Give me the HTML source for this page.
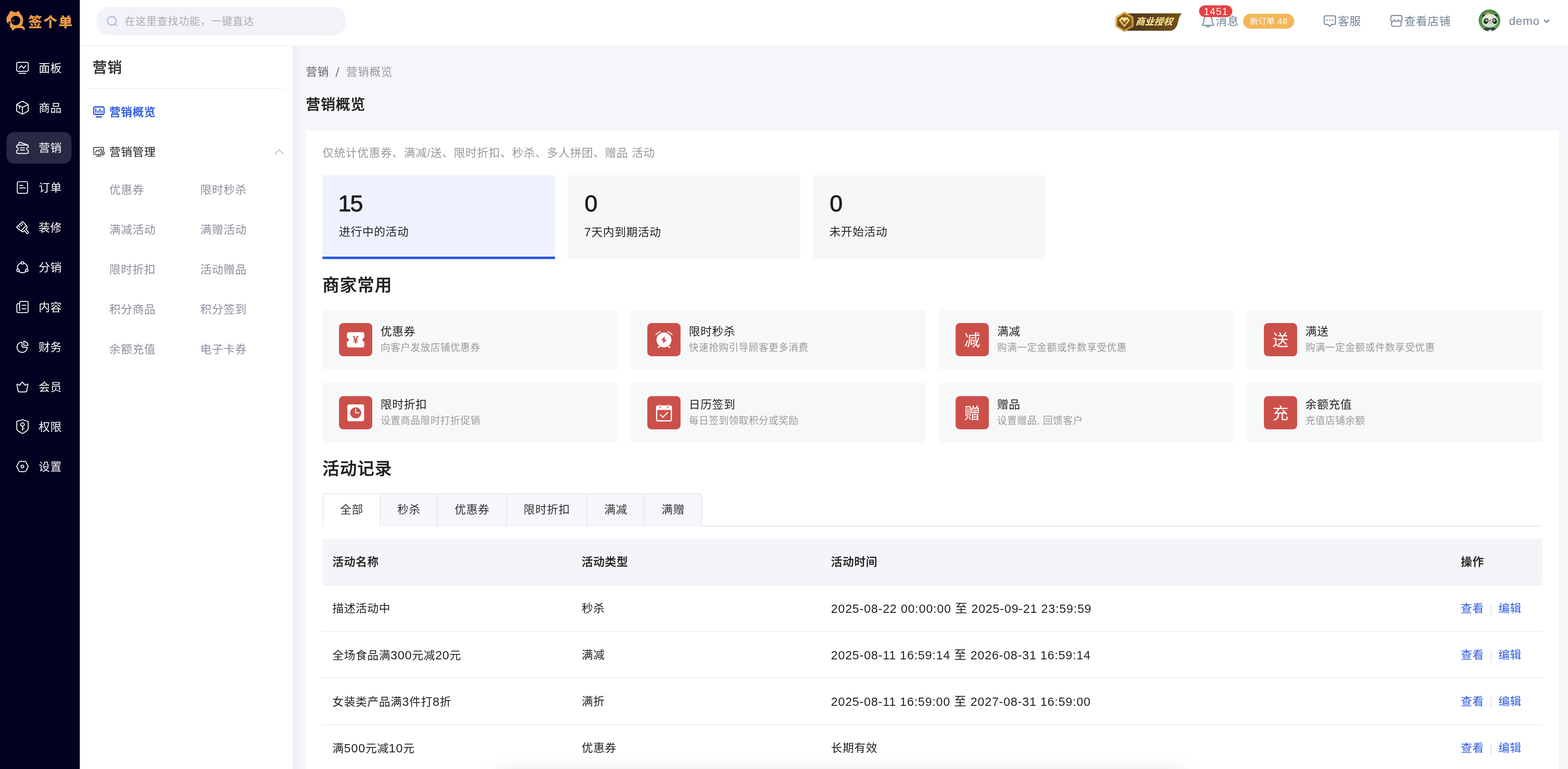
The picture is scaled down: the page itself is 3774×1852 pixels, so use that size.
<!DOCTYPE html>
<html lang="zh-CN">
<head>
<meta charset="utf-8">
<title>营销概览</title>
<style>
*{box-sizing:border-box;margin:0;padding:0}
html,body{width:3774px;height:1852px;overflow:hidden;background:#f5f6fa}
body{font-family:"Liberation Sans","Noto Sans CJK SC",sans-serif;font-size:27.2px;letter-spacing:.8px;color:#303133;-webkit-font-smoothing:antialiased}
#app{will-change:transform;position:relative;width:3774px;height:1852px;overflow:hidden;background:#f5f6fa}
.abs{position:absolute}
svg{display:block;overflow:visible}
/* ---------- left nav ---------- */
#nav{position:absolute;left:0;top:0;width:192px;height:1852px;background:#020121}
.ni{position:absolute;left:16px;width:156px;height:76px;border-radius:18px;color:#fff}
.ni.on{background:#2a2945}
.ni svg{position:absolute;left:14px;top:13px;width:50px;height:50px;fill:none;stroke:#fff;stroke-width:2.2;stroke-linecap:round;stroke-linejoin:round}
.ni span{position:absolute;left:77px;top:1px;line-height:76px;font-size:27.2px;letter-spacing:.8px;white-space:nowrap}
/* ---------- header ---------- */
#hd{position:absolute;left:192px;top:0;width:3582px;height:112px;background:#fff;border-bottom:2px solid #f0f1f5}
#search{position:absolute;left:40px;top:17px;width:600px;height:68px;border-radius:30px;background:#f2f3f8}
#search span{position:absolute;left:68px;top:0;line-height:68px;font-size:25.2px;letter-spacing:.8px;color:#a9abb2;white-space:nowrap}
.ht{position:absolute;top:1px;line-height:102px;font-size:27.2px;letter-spacing:.8px;color:#748698;white-space:nowrap}
/* ---------- sub menu ---------- */
#sub{position:absolute;left:192px;top:112px;width:512px;height:1740px;background:#fff}
#sub .tt{position:absolute;left:30.5px;top:15px;-webkit-text-stroke:.4px #333;line-height:72px;font-size:34.9px;letter-spacing:1.1px;font-weight:500;color:#333}
#sub .ln{position:absolute;left:20px;top:100px;width:472px;height:2px;background:#eff0f5}
#sub .m1{position:absolute;left:71px;line-height:60px;font-size:27.2px;letter-spacing:.8px;white-space:nowrap}
#sub .s{position:absolute;line-height:60px;font-size:27.2px;letter-spacing:.8px;color:#8d8f9c;white-space:nowrap}
/* ---------- main ---------- */
#main{position:absolute;left:704px;top:112px;width:3070px;height:1740px}#main:before{content:"";position:absolute;left:0;top:0;width:28px;height:100%;background:linear-gradient(90deg,rgba(30,40,90,.022),rgba(30,40,90,0))}
#bc{position:absolute;left:32px;top:37px;line-height:50px;font-size:27.2px;letter-spacing:.8px;color:#999;white-space:nowrap}
#bc b{font-weight:400;color:#666}#bc i{font-style:normal;display:inline;line-height:0;padding:0 15.8px;font-size:34px;letter-spacing:0;color:#888;position:relative;left:-.5px;top:3px}
#pt{position:absolute;left:32px;top:109.6px;line-height:60px;font-size:34.9px;letter-spacing:1.1px;font-weight:500;-webkit-text-stroke:.5px #1f1f1f;color:#1f1f1f;white-space:nowrap}
#panel{position:absolute;left:32px;top:202px;width:3016px;height:1600px;background:#fff}
#tip{position:absolute;left:40px;top:30px;line-height:50px;font-size:27.2px;letter-spacing:.8px;color:#999;white-space:nowrap}
.st{position:absolute;top:108px;width:560px;height:202px;background:#f7f7f7}
.st.on{background:#eef1fe;border-bottom:6px solid #2f5be0}
.st .n{position:absolute;left:38px;top:32px;line-height:72px;font-size:56px;font-weight:400;letter-spacing:-2.500px;-webkit-text-stroke:1.1px #1f1f1f;color:#1f1f1f}
.st .l{position:absolute;left:40px;top:112px;line-height:50px;font-size:27.2px;letter-spacing:.8px;color:#262626;white-space:nowrap}
.h2{position:absolute;left:40px;line-height:60px;font-size:40.7px;letter-spacing:1.3px;font-weight:500;-webkit-text-stroke:.6px #1f1f1f;color:#1f1f1f;white-space:nowrap}
.qc{position:absolute;width:710px;height:144px;background:#f7f8fa;border-radius:4px}
.qc .ic{position:absolute;left:40px;top:32px;width:80px;height:80px;border-radius:10px;background:#cc504a;color:#fff;font-size:38.500px;letter-spacing:0;line-height:83px;text-align:center}
.qc .ic svg{position:absolute;left:0;top:0;width:80px;height:80px}
.qc .t{position:absolute;left:140px;top:29px;line-height:48px;font-size:27.2px;letter-spacing:.8px;color:#222;white-space:nowrap}
.qc .d{position:absolute;left:140px;top:71px;line-height:40px;font-size:23.3px;letter-spacing:.7px;color:#999;white-space:nowrap}
#tabs{position:absolute;left:40px;top:874px;width:2936px;height:80px;border-bottom:2px solid #e4e7ed}
#tabs .tb{position:absolute;left:0;top:0;height:80px;display:flex;border:2px solid #e4e7ed;border-bottom:none;border-radius:8px 8px 0 0;background:#f5f7fa;overflow:hidden}
#tabs .tb div{height:78px;line-height:76px;padding:0 39.6px 0 40.4px;font-size:27.2px;letter-spacing:.8px;color:#303133;border-left:2px solid #e4e7ed;white-space:nowrap}
#tabs .tb div:first-child{border-left:none;background:#fff;height:80px}
#tbl{position:absolute;left:40px;top:984px;width:2936px}
.tr{position:relative;height:112px;border-bottom:2px solid #ebeef5}
.tr.th{background:#f4f5f9;font-weight:500;-webkit-text-stroke:.35px #1f1f1f}.tr.th div{top:1px;color:#1f1f1f}
.tr div{position:absolute;top:1px;color:#222;line-height:110px;font-size:27.2px;letter-spacing:.8px;white-space:nowrap}
.c1{left:24px}.c2{left:624px}.c3{left:1224px}.c4{left:2740px}
.c4 a{color:#2f5ce0;text-decoration:none}
.c4 i{display:inline-block;width:2px;height:28px;background:#dfe1e8;margin:0 16.4px 0 16px;vertical-align:-8px;letter-spacing:0}
.L{font-size:29px;letter-spacing:1.1px}
@media (max-width:2400px){html,body{width:1887px;height:926px}#app{zoom:.5}}
</style>
</head>
<body>
<div id="app">
<div id="nav">
<svg class="abs" style="left:0;top:10px;width:192px;height:80px" viewBox="0 0 192 80"><path fill="#ec9b45" fill-rule="evenodd" d="M28.300 15.800c2.500 2.500 5 3.600 8.200 3.700 3.200-.1 5.700-1.200 8.200-3.700 1.500 2.300 2.500 4.500 3.700 6.600 2 2.700 4 5 5.300 7.400 1.500 3 2 6 2 9s-.5 6.200-1.300 8.900c-.7 1.800-1.700 3.200-3 4.500 1.800.2 3.300.7 4.500 1.500 1.700 1 3 2.400 3.400 3.700.5 1.400.6 2.700.3 3.300-.4 1-1.200 1.800-2.200 2.300-.5-1.200-1.100-2.200-1.900-3-1-1-2.400-1.600-4.100-1.900-2-.4-4.300-.6-6.700-.7-2.700 0-5.200.4-7.400 1.100-1 .3-1.900.7-2.600 1.100-.1 1-.6 1.800-1.200 2.600-.9.400-2.300.6-3.700.6-1.200-.5-1.900-1.200-1.900-2.100.1-.7.700-1.300 1.500-1.800-1.500-.8-2.900-1.800-4.100-3-1.500-1.500-1.800-2.500-1.400-3 .5-.5.600-1 .3-1.900l-1-2.600c-1.700-.6-3.500-1.500-4.800-2.700-1.800-1.800-2.700-4-2.900-7.100-.2-2.700.1-4.900 1-7.300 1-2.500 2.600-4.600 4.200-6.900 1.300-2 2.500-4.500 3.600-6.600zM37.600 28.300a11.200 11.200 0 1 0 0 22.400 11.200 11.200 0 0 0 0-22.400z"/><rect x="29.100" y="38.600" width="5.600" height="2" rx=".6" fill="#ec9b45"/><circle cx="22.600" cy="44.600" r="2.600" fill="#020121"/><path d="M21 46l4 5.500-2.500-.8z" fill="#020121"/></svg><div class="abs" style="left:68px;top:31px;line-height:46px;font-size:33.500px;font-weight:900;letter-spacing:3px;color:#ec9b45;white-space:nowrap">签个单</div>
<div class="ni" style="top:126px"><svg viewBox="0 0 50 50" style="top:14px"><rect x="10.2" y="10.1" width="27.8" height="21.7" rx="3.4"/><path d="M15.8 23.9l5.600-5.900 5.100 6.200 5.700-5.900M15.800 36.600h16.500"/></svg><span>面板</span></div>
<div class="ni" style="top:222px"><svg viewBox="0 0 50 50" style="top:13px"><path d="M22.900 9.500a2.600 2.600 0 0 1 2.300 0l11.400 6.100a2.600 2.600 0 0 1 1.400 2.300v13.100a2.600 2.600 0 0 1-1.400 2.300l-11.400 6.100a2.600 2.600 0 0 1-2.300 0l-11.400-6.100a2.600 2.600 0 0 1-1.400-2.300V17.900a2.600 2.600 0 0 1 1.400-2.300z"/><path d="M10.700 17.200l13.350 6.300 13.350-6.300M24.050 23.500v16M16.700 20.400v6"/></svg><span>商品</span></div>
<div class="ni on" style="top:318px"><svg viewBox="0 0 50 50" style="top:13px"><path d="M13.200 18.400h21.800a3 3 0 0 1 3 3v2.600a3.700 3.700 0 0 0 0 7.400v4.200a3 3 0 0 1-3 3H13.200a3 3 0 0 1-3-3v-4.200a3.700 3.700 0 0 0 0-7.400v-2.600a3 3 0 0 1 3-3z"/><path d="M14 18.200l1.400-4.600a2.600 2.600 0 0 1 3.300-1.700l17.800 6.200M19.200 25h9.700M19.200 30.300h9.700"/></svg><span>营销</span></div>
<div class="ni" style="top:414px"><svg viewBox="0 0 50 50" style="top:13px"><rect x="11.600" y="10.500" width="24.800" height="28.100" rx="3.200"/><path d="M17.200 19.600h7.800M17.200 25.600h13.900"/></svg><span>订单</span></div>
<div class="ni" style="top:510px"><svg viewBox="0 0 50 50" style="top:13px"><path d="M23.300 11.200a1.600 1.600 0 0 1 2.300.1l9.400 11.300a2.400 2.400 0 0 1-.1 3.200l-3 3 5.600 6.100a2.500 2.500 0 0 1-3.600 3.500l-5.200-6.400-2.400 2.400a2.600 2.600 0 0 1-3.400.2L10.900 25.500a1.600 1.600 0 0 1-.1-2.400z"/><path d="M31.900 21.300L21.800 32M15.600 22.300l1.900 2M19.500 18.700l1.900 2.100M23 15.400l1.500 2.300"/></svg><span>装修</span></div>
<div class="ni" style="top:606px"><svg viewBox="0 0 50 50" style="top:13px"><circle cx="23.900" cy="25.900" r="12"/><circle cx="23.850" cy="14.050" r="3.100" fill="#020121"/><circle cx="13.450" cy="32.050" r="3.100" fill="#020121"/><circle cx="34.400" cy="32.050" r="3.100" fill="#020121"/></svg><span>分销</span></div>
<div class="ni" style="top:702px"><svg viewBox="0 0 50 50" style="top:13px"><path d="M17.200 16.400h-3.500a3.200 3.200 0 0 0-3.200 3.200v15.200a3.200 3.200 0 0 0 3.200 3.200h20.700a3.200 3.200 0 0 0 3.200-3.200V14.100a3.200 3.200 0 0 0-3.200-3.200H20.400a3.200 3.200 0 0 0-3.200 3.200v18.700M22.900 20h9.300M22.900 28.900h9.300"/></svg><span>内容</span></div>
<div class="ni" style="top:798px"><svg viewBox="0 0 50 50" style="top:13px"><path d="M23 13A12.300 12.300 0 1 0 35.600 25.300H26a3 3 0 0 1-3-3z"/><path d="M27.300 10.900a10.100 10.100 0 0 1 9.900 10.100h-9.900z"/></svg><span>财务</span></div>
<div class="ni" style="top:894px"><svg viewBox="0 0 50 50" style="top:13px"><path d="M10.700 19.200a1 1 0 0 1 1.400-1l4.300 2.300a1.200 1.200 0 0 0 1.500-.3l5.100-6.400a1.200 1.200 0 0 1 1.900 0l5.100 6.400a1.200 1.200 0 0 0 1.500.3l4.300-2.300a1 1 0 0 1 1.400 1l-2.800 15a3.200 3.200 0 0 1-3.100 2.600H16.600a3.200 3.200 0 0 1-3.100-2.600z"/></svg><span>会员</span></div>
<div class="ni" style="top:990px"><svg viewBox="0 0 50 50" style="top:13px"><path d="M23.300 8a2.400 2.400 0 0 1 1.500 0l12.100 3.800a1.300 1.300 0 0 1 .9 1.200v15.500c0 3-1.500 5.300-4.300 7L25 40.600a1.800 1.800 0 0 1-1.900 0L14.600 35.500c-2.800-1.700-4.300-4-4.300-7V13a1.300 1.300 0 0 1 .9-1.200z"/><circle cx="24.200" cy="19.400" r="4.200"/><path d="M24.200 23.600v10M24.200 28.500h3.900"/></svg><span>权限</span></div>
<div class="ni" style="top:1086px"><svg viewBox="0 0 50 50" style="top:13px"><path d="M18.600 12.100h10.900a3.200 3.200 0 0 1 2.800 1.600l5 9a3.200 3.200 0 0 1 0 3.200l-5 9.300a3.200 3.200 0 0 1-2.800 1.600H18.600a3.200 3.200 0 0 1-2.800-1.600l-5-9.300a3.200 3.200 0 0 1 0-3.200l5-9a3.200 3.200 0 0 1 2.800-1.600z"/><circle cx="23.900" cy="24.400" r="3.400"/></svg><span>设置</span></div>
</div>
<div id="hd">
<div id="search"><svg class="abs" style="left:26px;top:22px;width:26px;height:26px" viewBox="0 0 26 26" fill="none" stroke="#8b9fd2" stroke-width="1.700"><circle cx="11.200" cy="11.200" r="10.400"/><path d="M18.500 18.500l4.300 4.500" stroke-linecap="round"/></svg><span>在这里查找功能，一键直达</span></div>
<svg class="abs" style="left:2478px;top:15px;width:190px;height:75px" viewBox="0 0 190 75"><defs><linearGradient id="bg1" x1="0" y1="0" x2="1" y2="0"><stop offset="0" stop-color="#4a3522"/><stop offset=".6" stop-color="#63451a"/><stop offset="1" stop-color="#755218"/></linearGradient><linearGradient id="bg2" x1="0" y1="0" x2="1" y2="1"><stop offset="0" stop-color="#f1d57c"/><stop offset=".5" stop-color="#d2a443"/><stop offset="1" stop-color="#b98b30"/></linearGradient><linearGradient id="bg3" x1="0" y1="0" x2="0" y2="1"><stop offset="0" stop-color="#93641f"/><stop offset="1" stop-color="#6a4514"/></linearGradient><linearGradient id="bg4" x1="0" y1="0" x2="0" y2="1"><stop offset="0" stop-color="#f8e59c"/><stop offset="1" stop-color="#d4ae55"/></linearGradient></defs><path fill="url(#bg1)" d="M40 17.200h134.500c-4.500 5-7 10.500-8.500 18-1.500 8-3.500 14.500-9 19.500-3.500 3-7.500 4.300-11.500 4.300H40z"/><path fill="url(#bg2)" d="M36.100 12.200l22.200 13.200V49L36.100 61.700 14.400 49V25.400z"/><path fill="url(#bg3)" d="M36.100 17.600l17.600 10.400v18.400L36.100 56.400 18.900 46.400V28z"/><path fill="url(#bg4)" d="M29.100 27h14.400l5.900 7L36.100 51 22.900 34z"/><path fill="#7a5218" d="M27 33h4.800l4.400 6.100 4.400-6.100h4.800l-9.200 12z"/></svg><div class="abs" style="left:2541px;top:33px;line-height:40px;font-size:22.500px;font-weight:900;font-style:italic;letter-spacing:0;color:#f3d98c;white-space:nowrap;transform:skewX(-4deg);text-shadow:0 1px 1px rgba(60,35,5,.5)">商业授权</div><svg class="abs" style="left:2688px;top:26px;width:60px;height:50px" viewBox="0 0 60 50" fill="none" stroke="#748698" stroke-width="2.300" stroke-linecap="round" stroke-linejoin="round"><path d="M17.400 22.400a10.100 10.100 0 0 1 20.200 0v3.600c0 1.800.5 3 1.500 4.300l1.700 2.300a1.500 1.500 0 0 1-1.200 2.400H15.400a1.500 1.500 0 0 1-1.200-2.400l1.700-2.300c1-1.300 1.500-2.500 1.500-4.300z"/><path d="M22.800 35.400a4.900 4.900 0 0 0 9.400 0"/></svg><svg class="abs" style="left:2983px;top:26px;width:60px;height:50px" viewBox="0 0 60 50" fill="none" stroke="#748698" stroke-width="2.400" stroke-linejoin="round"><path d="M15 12.100h21.300a2.700 2.700 0 0 1 2.700 2.700v15.300a2.700 2.700 0 0 1-2.700 2.700h-6.200l-4.400 4.800-4.300-4.800H15a2.700 2.700 0 0 1-2.700-2.700V14.800a2.700 2.700 0 0 1 2.700-2.700z"/><g fill="#748698" stroke="none"><circle cx="18.900" cy="22.500" r="1.800"/><circle cx="26" cy="22.500" r="1.800"/><circle cx="33" cy="22.500" r="1.800"/></g></svg><svg class="abs" style="left:3143px;top:26px;width:60px;height:50px" viewBox="0 0 60 50" fill="none" stroke="#748698" stroke-width="2.400" stroke-linecap="round" stroke-linejoin="round"><path d="M16.300 11.300h19.300a3.400 3.400 0 0 1 3.400 3.200l.8 6.300a4.600 4.600 0 0 1-9.200.3 4.600 4.600 0 0 1-9.200 0 4.600 4.600 0 0 1-9.200-.3l.8-6.300a3.400 3.400 0 0 1 3.300-3.200z"/><path d="M14.500 25v8.900a3.500 3.500 0 0 0 3.500 3.500h15.700a3.500 3.500 0 0 0 3.500-3.500V25"/></svg>
<div class="ht" style="left:2734px">消息</div>
<div class="abs" id="rb" style="left:2694px;top:13px;width:80px;height:28px;border-radius:14px;background:#e84141;color:#fff;font-size:23.5px;line-height:31px;text-align:center;letter-spacing:1.6px;padding-left:1.6px">1451</div>
<div class="abs" id="ob" style="left:2800px;top:33px;width:123px;height:36px;border-radius:18px;background:#f3b75a;color:#fff;font-size:19.5px;letter-spacing:.6px;line-height:36px;text-align:center;white-space:nowrap;padding-left:1px">新订单 <span style="font-size:20.5px;letter-spacing:1px">48</span></div>
<div class="ht" style="left:3028px">客服</div>
<div class="ht" style="left:3188px">查看店铺</div>
<svg class="abs" style="left:3358px;top:14px;width:70px;height:70px" viewBox="0 0 70 70"><defs><clipPath id="avc"><circle cx="35" cy="35" r="26.200"/></clipPath><linearGradient id="avg" x1="0" y1="0" x2="0" y2="1"><stop offset="0" stop-color="#4c8748"/><stop offset="1" stop-color="#659c50"/></linearGradient><radialGradient id="avh" cx=".45" cy=".3" r=".8"><stop offset="0" stop-color="#e6f4e4"/><stop offset="1" stop-color="#b9d9bb"/></radialGradient></defs><circle cx="35" cy="35" r="26.200" fill="url(#avg)"/><g clip-path="url(#avc)"><path d="M20 62c1-7 5-11 10-11h11c6 0 10 4 11 11z" fill="#3c4640"/><ellipse cx="36.500" cy="60.500" rx="4" ry="3" fill="#cfe6cf"/><circle cx="21.300" cy="24.200" r="3.300" fill="#1d241f"/><circle cx="50.500" cy="23.900" r="3.400" fill="#1d241f"/><ellipse cx="36" cy="36" rx="19.100" ry="16.600" fill="url(#avh)"/><ellipse cx="26.900" cy="36.700" rx="5.700" ry="7" transform="rotate(25 26.900 36.700)" fill="#1f2521"/><ellipse cx="47.100" cy="36.700" rx="5.700" ry="7" transform="rotate(-25 47.100 36.700)" fill="#1f2521"/><circle cx="28.200" cy="35.500" r="3" fill="#fff"/><circle cx="45.700" cy="35.500" r="3" fill="#fff"/><circle cx="28.800" cy="35.500" r="1.500" fill="#222"/><circle cx="45.100" cy="35.500" r="1.500" fill="#222"/><circle cx="36.300" cy="35.400" r="2.100" fill="#d8563c"/><path d="M36.300 37.600v3.400M34.300 42.100c1.500.3 3.700-.2 5.500-1.400" stroke="#7a5a4a" stroke-width=".7" fill="none" stroke-linecap="round"/><path d="M30.700 14.700l9.200 4.400-16.100 3.600z" fill="#dca34c"/></g></svg>
<div class="ht" style="left:3440px;color:#748698;font-size:28px;letter-spacing:1px;top:0">demo</div>
<svg class="abs" style="left:3523px;top:46px;width:15px;height:10px" viewBox="0 0 15 10" fill="none" stroke="#6f8098" stroke-width="2.8" stroke-linecap="round" stroke-linejoin="round"><path d="M2 2.200l5.500 5.500 5.500-5.500"/></svg>
</div>
<div id="sub">
<div class="tt">营销</div>
<div class="ln"></div>
<svg class="abs" style="left:22px;top:133px;width:50px;height:50px" viewBox="0 0 50 50" fill="none" stroke="#2650e0" stroke-width="2.800" stroke-linecap="round" stroke-linejoin="round"><rect x="11.500" y="12.500" width="24.900" height="18" rx="3"/><path d="M16.600 17.400v8.700M21.600 22.400v3.700M26.600 17.400v8.700M31.500 22.400v3.700M18 36.500h12.700"/></svg>
<div class="m1" style="top:129px;color:#2f5be0;font-weight:500;-webkit-text-stroke:.4px #2f5be0">营销概览</div>
<svg class="abs" style="left:22px;top:229px;width:50px;height:50px" viewBox="0 0 50 50" fill="none" stroke="#2b2b2b" stroke-width="1.850" stroke-linecap="round" stroke-linejoin="round"><path d="M35.300 21.400v-5a2.600 2.600 0 0 0-2.600-2.600H14.100a2.600 2.600 0 0 0-2.600 2.600v11.800a2.600 2.600 0 0 0 2.600 2.600h13M23.300 30.800v4.200M17.600 35.100h11.700M15.500 26.400l3.900-5.800 5.100 2.900 4-6.100 2.900 4"/><path d="M32.04 23.39Q32.75 22.30 33.46 23.39Q34.17 24.48 35.44 24.21Q36.71 23.94 36.44 25.21Q36.17 26.48 37.26 27.19Q38.35 27.90 37.26 28.61Q36.17 29.32 36.44 30.59Q36.71 31.86 35.44 31.59Q34.17 31.32 33.46 32.41Q32.75 33.50 32.04 32.41Q31.33 31.32 30.06 31.59Q28.79 31.86 29.06 30.59Q29.33 29.32 28.24 28.61Q27.15 27.90 28.24 27.19Q29.33 26.48 29.06 25.21Q28.79 23.94 30.06 24.21Q31.33 24.48 32.04 23.39z" stroke-width="1.500"/><circle cx="32.750" cy="27.900" r="1.500" stroke-width="1.400"/></svg>
<div class="m1" style="top:225px;color:#222">营销管理</div>
<svg class="abs" style="left:469px;top:248px;width:22px;height:12px" viewBox="0 0 22 12" fill="none" stroke="#b4b7c3" stroke-width="1.8" stroke-linecap="round" stroke-linejoin="round"><path d="M1 11L11 1l10 10"/></svg>
<div class="s" style="left:71px;top:316px">优惠券</div><div class="s" style="left:290px;top:316px">限时秒杀</div>
<div class="s" style="left:71px;top:412px">满减活动</div><div class="s" style="left:290px;top:412px">满赠活动</div>
<div class="s" style="left:71px;top:508px">限时折扣</div><div class="s" style="left:290px;top:508px">活动赠品</div>
<div class="s" style="left:71px;top:604px">积分商品</div><div class="s" style="left:290px;top:604px">积分签到</div>
<div class="s" style="left:71px;top:700px">余额充值</div><div class="s" style="left:290px;top:700px">电子卡券</div>
</div>
<div id="main">
<div id="bc"><b>营销</b><i>/</i>营销概览</div>
<div id="pt">营销概览</div>
<div id="panel">
<div id="tip">仅统计优惠券、满减/送、限时折扣、秒杀、多人拼团、赠品 活动</div>
<div class="st on" style="left:40px"><div class="n">15</div><div class="l">进行中的活动</div></div>
<div class="st" style="left:630px"><div class="n" style="left:41px">0</div><div class="l"><span class="L">7</span>天内到期活动</div></div>
<div class="st" style="left:1220px"><div class="n" style="left:41px">0</div><div class="l">未开始活动</div></div>
<div class="h2" style="top:343px">商家常用</div>
<div class="qc" style="left:40px;top:432px"><div class="ic"><svg viewBox="0 0 80 80"><path fill="#fff" d="M23.700 22h32.500a4.700 4.700 0 0 1 4.700 4.700v9.100a4.500 4.500 0 0 0 0 9v9.300a4.700 4.700 0 0 1-4.700 4.700H23.700a4.700 4.700 0 0 1-4.700-4.700v-9.300a4.500 4.500 0 0 0 0-9v-9.100a4.700 4.700 0 0 1 4.700-4.700z"/></svg><span style="position:absolute;left:0;top:0;width:80px;line-height:80px;text-align:center;font-size:25px;font-weight:700;color:#cc504a;letter-spacing:0">¥</span></div><div class="t">优惠券</div><div class="d">向客户发放店铺优惠券</div></div>
<div class="qc" style="left:782px;top:432px"><div class="ic"><svg viewBox="0 0 80 80"><circle cx="40.100" cy="40.700" r="18" fill="#fff"/><path fill="none" stroke="#fff" stroke-width="2.300" stroke-linecap="round" d="M20.700 28.100a23.500 23.500 0 0 1 10.500-7.600M49.300 20.500a23.500 23.500 0 0 1 10.500 7.600"/><path fill="none" stroke="#fff" stroke-width="2.900" stroke-linecap="round" d="M29.300 55.800l-3.200 3.500M51.200 55.800l3.200 3.500"/><path fill="#cc504a" d="M41.900 32l-8.700 9.900h5v7.500l8.900-9.300h-5.200z"/></svg></div><div class="t">限时秒杀</div><div class="d">快速抢购引导顾客更多消费</div></div>
<div class="qc" style="left:1524px;top:432px"><div class="ic">减</div><div class="t">满减</div><div class="d">购满一定金额或件数享受优惠</div></div>
<div class="qc" style="left:2266px;top:432px"><div class="ic">送</div><div class="t">满送</div><div class="d">购满一定金额或件数享受优惠</div></div>
<div class="qc" style="left:40px;top:608px"><div class="ic"><svg viewBox="0 0 80 80"><rect x="20" y="20" width="40.400" height="40.500" rx="4.600" fill="#fff"/><circle cx="40.100" cy="40.300" r="13.300" fill="#cc504a"/><path fill="none" stroke="#fff" stroke-width="2.300" stroke-linecap="round" stroke-linejoin="round" d="M40.100 30.800v9.500h8.200"/></svg></div><div class="t">限时折扣</div><div class="d">设置商品限时打折促销</div></div>
<div class="qc" style="left:782px;top:608px"><div class="ic"><svg viewBox="0 0 80 80"><rect x="21" y="22.200" width="38.300" height="38.700" rx="4.200" fill="#fff"/><rect x="24" y="33.300" width="32.300" height="24.700" rx="1" fill="#cc504a"/><path fill="none" stroke="#cc504a" stroke-width="4.600" stroke-linecap="round" d="M30.900 21.200v5M49.400 21.200v5"/><path fill="none" stroke="#fff" stroke-width="2.500" stroke-linecap="round" d="M30.900 21.200v5M49.400 21.200v5"/><path fill="none" stroke="#fff" stroke-width="2.600" stroke-linecap="round" stroke-linejoin="round" d="M31.700 45.200l5.500 5.800 11.800-11.700"/></svg></div><div class="t">日历签到</div><div class="d">每日签到领取积分或奖励</div></div>
<div class="qc" style="left:1524px;top:608px"><div class="ic">赠</div><div class="t">赠品</div><div class="d">设置赠品, 回馈客户</div></div>
<div class="qc" style="left:2266px;top:608px"><div class="ic">充</div><div class="t">余额充值</div><div class="d">充值店铺余额</div></div>
<div class="h2" style="top:785px">活动记录</div>
<div id="tabs"><div class="tb"><div>全部</div><div>秒杀</div><div>优惠券</div><div>限时折扣</div><div>满减</div><div>满赠</div></div></div>
<div id="tbl">
<div class="tr th"><div class="c1">活动名称</div><div class="c2">活动类型</div><div class="c3">活动时间</div><div class="c4">操作</div></div>
<div class="tr"><div class="c1">描述活动中</div><div class="c2">秒杀</div><div class="c3" style="font-size:29px;letter-spacing:1.07px">2025-08-22 00:00:00 至 2025-09-21 23:59:59</div><div class="c4"><a>查看</a><i></i><a>编辑</a></div></div>
<div class="tr"><div class="c1">全场食品满<span class="L">300</span>元减<span class="L">20</span>元</div><div class="c2">满减</div><div class="c3" style="font-size:29px;letter-spacing:1.07px">2025-08-11 16:59:14 至 2026-08-31 16:59:14</div><div class="c4"><a>查看</a><i></i><a>编辑</a></div></div>
<div class="tr"><div class="c1">女装类产品满<span class="L">3</span>件打<span class="L">8</span>折</div><div class="c2">满折</div><div class="c3" style="font-size:29px;letter-spacing:1.07px">2025-08-11 16:59:00 至 2027-08-31 16:59:00</div><div class="c4"><a>查看</a><i></i><a>编辑</a></div></div>
<div class="tr"><div class="c1">满<span class="L">500</span>元减<span class="L">10</span>元</div><div class="c2">优惠券</div><div class="c3">长期有效</div><div class="c4"><a>查看</a><i></i><a>编辑</a></div></div>
</div>
</div>
</div>
<div class="abs" style="left:1200px;top:1868px;width:1650px;height:60px;border-radius:30px;box-shadow:0 0 56px 6px rgba(0,0,0,.13)"></div>
</div>
</body>
</html>
